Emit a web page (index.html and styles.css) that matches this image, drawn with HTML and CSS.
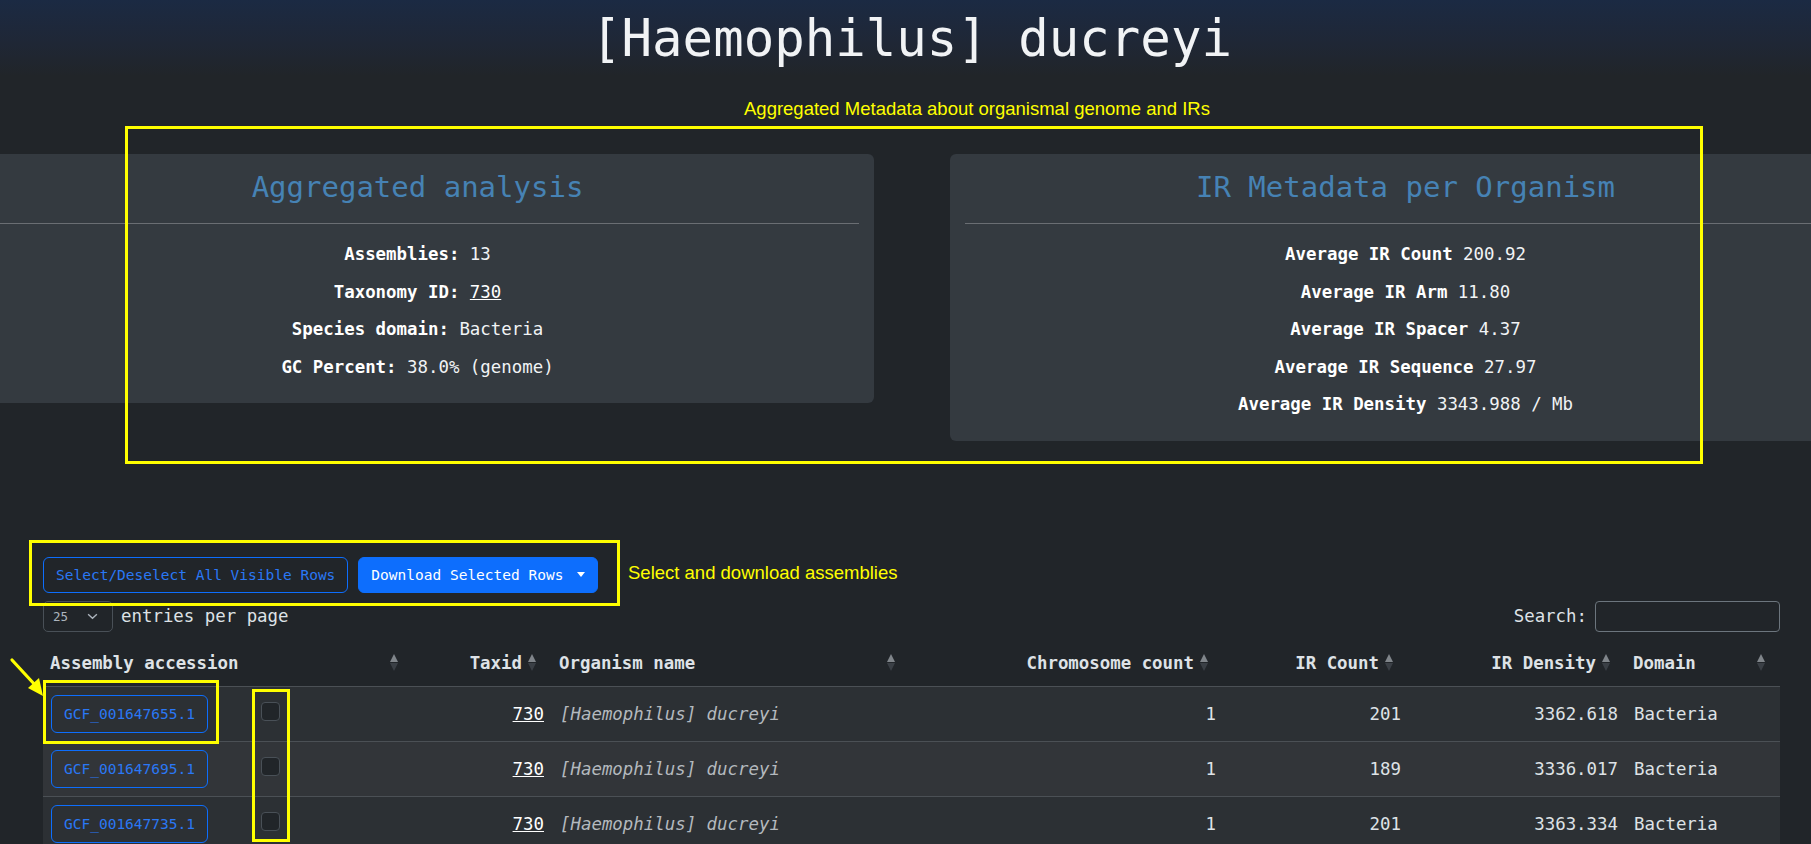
FILE: index.html
```html
<!DOCTYPE html>
<html lang="en">
<head>
<meta charset="utf-8">
<title>[Haemophilus] ducreyi</title>
<link rel="stylesheet" href="styles.css">
</head>
<body>
<div class="page">
  <header class="hero">
    <h1 class="hero-title">[Haemophilus] ducreyi</h1>
  </header>

  <section class="summary">
    <div class="card">
      <h2 class="card-title">Aggregated analysis</h2>
      <hr class="card-rule">
      <p class="stat"><b>Assemblies:</b> 13</p>
      <p class="stat"><b>Taxonomy ID:</b> <a class="link" href="#">730</a></p>
      <p class="stat"><b>Species domain:</b> Bacteria</p>
      <p class="stat"><b>GC Percent:</b> 38.0% (genome)</p>
    </div>
    <div class="card">
      <h2 class="card-title">IR Metadata per Organism</h2>
      <hr class="card-rule">
      <p class="stat"><b>Average IR Count</b> 200.92</p>
      <p class="stat"><b>Average IR Arm</b> 11.80</p>
      <p class="stat"><b>Average IR Spacer</b> 4.37</p>
      <p class="stat"><b>Average IR Sequence</b> 27.97</p>
      <p class="stat"><b>Average IR Density</b> 3343.988 / Mb</p>
    </div>
  </section>

  <section class="assemblies">
    <div class="toolbar">
      <button class="btn btn-outline">Select/Deselect All Visible Rows</button>
      <button class="btn btn-primary">Download Selected Rows<span class="caret"></span></button>
    </div>

    <div class="dt-controls">
      <div class="dt-length">
        <div class="dt-select"><span>25</span>
          <svg class="chev" viewBox="0 0 12 8" width="11" height="7"><path d="M1 1.5 L6 6 L11 1.5" fill="none" stroke="#adb5bd" stroke-width="1.6"/></svg>
        </div>
        <span class="dt-label">entries per page</span>
      </div>
      <div class="dt-search">
        <span class="dt-label">Search:</span>
        <div class="dt-input"></div>
      </div>
    </div>

    <table class="dt">
      <colgroup>
        <col class="c-acc"><col class="c-tax"><col class="c-org"><col class="c-chr"><col class="c-irc"><col class="c-ird"><col class="c-dom">
      </colgroup>
      <thead>
        <tr>
          <th><div class="th-inner"><span>Assembly accession</span><span class="sort"></span></div></th>
          <th class="num"><div class="th-inner"><span>Taxid</span><span class="sort"></span></div></th>
          <th><div class="th-inner"><span>Organism name</span><span class="sort"></span></div></th>
          <th class="num"><div class="th-inner"><span>Chromosome count</span><span class="sort"></span></div></th>
          <th class="num"><div class="th-inner"><span>IR Count</span><span class="sort"></span></div></th>
          <th class="num"><div class="th-inner"><span>IR Density</span><span class="sort"></span></div></th>
          <th><div class="th-inner"><span>Domain</span><span class="sort"></span></div></th>
        </tr>
      </thead>
      <tbody>
        <tr class="odd">
          <td><div class="acc-cell"><button class="btn btn-outline btn-acc">GCF_001647655.1</button><span class="check"></span></div></td>
          <td class="num"><a class="link" href="#">730</a></td>
          <td class="org">[Haemophilus] ducreyi</td>
          <td class="num">1</td>
          <td class="num">201</td>
          <td class="num">3362.618</td>
          <td>Bacteria</td>
        </tr>
        <tr class="hover">
          <td><div class="acc-cell"><button class="btn btn-outline btn-acc">GCF_001647695.1</button><span class="check"></span></div></td>
          <td class="num"><a class="link" href="#">730</a></td>
          <td class="org">[Haemophilus] ducreyi</td>
          <td class="num">1</td>
          <td class="num">189</td>
          <td class="num">3336.017</td>
          <td>Bacteria</td>
        </tr>
        <tr class="odd">
          <td><div class="acc-cell"><button class="btn btn-outline btn-acc">GCF_001647735.1</button><span class="check"></span></div></td>
          <td class="num"><a class="link" href="#">730</a></td>
          <td class="org">[Haemophilus] ducreyi</td>
          <td class="num">1</td>
          <td class="num">201</td>
          <td class="num">3363.334</td>
          <td>Bacteria</td>
        </tr>
      </tbody>
    </table>
  </section>
</div>

<div class="annotations">
  <p class="note note-summary">Aggregated Metadata about organismal genome and IRs</p>
  <div class="hl hl-summary"></div>
  <div class="hl hl-toolbar"></div>
  <p class="note note-toolbar">Select and download assemblies</p>
  <div class="hl hl-acc"></div>
  <div class="hl hl-checks"></div>
  <svg class="arrow" viewBox="0 0 44 46" width="44" height="46">
    <line x1="6" y1="5" x2="30" y2="31" stroke="#ffff00" stroke-width="3.2" stroke-linecap="round"/>
    <polygon points="37,41 22,33 33,23" fill="#ffff00"/>
  </svg>
</div>
</body>
</html>
```

FILE: styles.css
```css
* { box-sizing: border-box; }

html, body {
  margin: 0;
  padding: 0;
}

body {
  position: relative;
  width: 1811px;
  height: 844px;
  overflow: hidden;
  background: #212529;
  color: #dee2e6;
  font-family: "DejaVu Sans Mono", "Liberation Mono", monospace;
  font-size: 17.4px;
}

.page {
  width: 1823px;
}

/* ---------- hero ---------- */
.hero {
  height: 76px;
  padding-top: 9px;
  background: linear-gradient(180deg, #1b2a43 0%, #1f2736 55%, #212529 100%);
  text-align: center;
}

.hero-title {
  margin: 0;
  font-weight: 400;
  font-size: 50.7px;
  line-height: 60px;
  color: #f1f3f5;
}

/* ---------- summary cards ---------- */
.summary {
  display: flex;
  justify-content: center;
  align-items: flex-start;
  gap: 76px;
  margin-top: 78px;
}

.card {
  flex: none;
  width: 912px;
  padding: 16px 15px 9px;
  background: #343a40;
  border-radius: 6px;
  text-align: center;
}

.card-title {
  margin: 0;
  font-weight: 400;
  font-size: 29px;
  line-height: 35px;
  color: #4682b4;
}

.card-rule {
  margin: 18px 0 20px;
  border: 0;
  border-top: 1px solid #6a6e73;
}

.stat {
  margin: 0 0 16.5px;
  line-height: 21px;
  color: #f1f3f5;
}

.stat b {
  color: #ffffff;
}

.link {
  color: #ffffff;
  text-decoration: underline;
}

/* ---------- assemblies ---------- */
.assemblies {
  padding: 0 43px;
  margin-top: 116px;
}

.toolbar {
  display: flex;
  gap: 10px;
}

.btn {
  font-family: "DejaVu Sans Mono", monospace;
  font-size: 14.5px;
  line-height: 20px;
  border-radius: 6px;
  cursor: pointer;
}

.toolbar .btn {
  height: 36px;
  padding: 7px 12px;
}

.btn-outline {
  background: transparent;
  border: 1px solid #0d6efd;
  color: #2a78f5;
}

.btn-primary {
  display: flex;
  align-items: center;
  background: #0d6efd;
  border: 1px solid #0d6efd;
  color: #ffffff;
}

.caret {
  display: inline-block;
  margin-left: 14px;
  border-top: 5px solid #ffffff;
  border-left: 4.5px solid transparent;
  border-right: 4.5px solid transparent;
}

.dt-controls {
  display: flex;
  justify-content: space-between;
  align-items: center;
  margin-top: 8px;
  height: 31px;
}

.dt-length,
.dt-search {
  display: flex;
  align-items: center;
  gap: 8px;
}

.dt-select {
  display: flex;
  align-items: center;
  justify-content: space-between;
  width: 70px;
  height: 31px;
  padding: 0 14px 0 9px;
  border: 1px solid #495057;
  border-radius: 5px;
  font-size: 12.5px;
  color: #adb5bd;
}

.dt-label {
  color: #dee2e6;
}

.dt-input {
  width: 185px;
  height: 31px;
  border: 1px solid #6c757d;
  border-radius: 4px;
  background: #212529;
}

/* ---------- table ---------- */
.dt {
  width: 100%;
  margin-top: 8px;
  border-collapse: collapse;
  table-layout: fixed;
}

.c-acc { width: 370px; }
.c-tax { width: 139px; }
.c-org { width: 358px; }
.c-chr { width: 314px; }
.c-irc { width: 185px; }
.c-ird { width: 217px; }
.c-dom { width: 154px; }

.dt th {
  padding: 11px 15px 11px 7px;
  line-height: 24px;
  font-weight: 700;
  color: #dee2e6;
  text-align: left;
  border-bottom: 1px solid #4b5055;
}

.th-inner {
  display: flex;
  align-items: center;
  gap: 6px;
}

.th-inner .sort {
  margin-left: auto;
}

.dt th.num .th-inner {
  justify-content: flex-end;
}

.dt th.num .th-inner .sort {
  margin-left: 0;
}

.dt th.num {
  padding-right: 16px;
}

.sort {
  display: flex;
  flex-direction: column;
  gap: 1px;
  flex: none;
  width: 8px;
}

.sort::before,
.sort::after {
  content: "";
  display: block;
  border-left: 4px solid transparent;
  border-right: 4px solid transparent;
}

.sort::before {
  border-bottom: 8px solid #80858a;
}

.sort::after {
  border-top: 8px solid #3a3f45;
}

.dt td {
  padding: 8px;
  line-height: 24px;
  vertical-align: middle;
  border-bottom: 1px solid #4b5055;
  color: #dee2e6;
  white-space: nowrap;
}

.dt td.num {
  text-align: right;
}

.dt tr.odd td { background: #2c3034; }
.dt tr.hover td { background: #323539; }

.dt td.org {
  font-style: italic;
  color: #b4b9be;
}

.acc-cell {
  display: flex;
  align-items: center;
  gap: 53px;
}

.btn-acc {
  height: 38px;
  padding: 8px 12px;
}

.check {
  width: 19px;
  height: 19px;
  margin-top: -4px;
  border: 1px solid #495057;
  border-radius: 4px;
  background: #212529;
}

/* ---------- annotation overlays ---------- */
.annotations .note {
  position: absolute;
  margin: 0;
  font-family: "Liberation Sans", Arial, sans-serif;
  font-size: 18.5px;
  line-height: 22px;
  color: #ffff00;
  white-space: nowrap;
}

.note-summary { left: 744px; top: 98px; }
.note-toolbar { left: 628px; top: 562px; }

.hl {
  position: absolute;
  border: 3px solid #ffff00;
}

.hl-summary { left: 125px; top: 126px; width: 1578px; height: 338px; }
.hl-toolbar { left: 29px; top: 540px; width: 591px; height: 66px; }
.hl-acc { left: 43px; top: 680px; width: 176px; height: 64px; }
.hl-checks { left: 252px; top: 689px; width: 38px; height: 153px; }

.arrow {
  position: absolute;
  left: 6px;
  top: 655px;
}
```
